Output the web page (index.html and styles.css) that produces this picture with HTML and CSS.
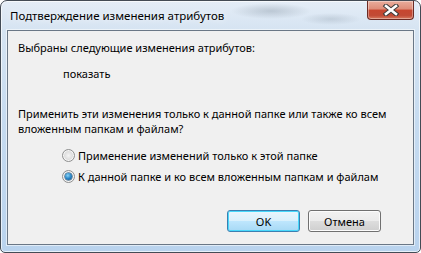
FILE: index.html
```html
<!DOCTYPE html>
<html lang="ru">
<head>
  <meta charset="UTF-8" />
  <title>Подтверждение изменения атрибутов</title>
  <link rel="stylesheet" href="styles.css">
</head>
<body>

  <div class="window">
    <div class="titlebar">
      <span class="title">Подтверждение изменения атрибутов</span>
      <button class="close-btn" aria-label="Закрыть">
        <svg width="18" height="12" viewBox="0 0 18 12">
          <path d="M4 2 L14 10 M14 2 L4 10" stroke="#3b3b3b" stroke-width="4.6" stroke-linecap="square" fill="none"/>
          <path d="M4 2 L14 10 M14 2 L4 10" stroke="#ffffff" stroke-width="2.6" stroke-linecap="square" fill="none"/>
        </svg>
      </button>
    </div>

    <div class="client">
      <p class="line">Выбраны следующие изменения атрибутов:</p>
      <p class="line change">показать</p>
      <p class="line question">Применить эти изменения только к данной папке или также ко всем<br>вложенным папкам и файлам?</p>

      <div class="options">
        <label class="option">
          <span class="radio"></span>
          <span>Применение изменений только к этой папке</span>
        </label>
        <label class="option">
          <span class="radio checked"></span>
          <span>К данной папке и ко всем вложенным папкам и файлам</span>
        </label>
      </div>

      <div class="buttons">
        <button class="btn btn-default">OK</button>
        <button class="btn">Отмена</button>
      </div>
    </div>
  </div>

</body>
</html>
```

FILE: styles.css
```css
* {
  margin: 0;
  padding: 0;
  box-sizing: border-box;
}

body {
  font-family: 'Noto Sans', 'Liberation Sans', sans-serif;
  font-size: 11px;
  color: #000;
  background: #fff;
  width: 421px;
  height: 253px;
  overflow: hidden;
}

.window {
  width: 421px;
  height: 253px;
  border: 1px solid #434b55;
  border-radius: 7px 7px 5px 5px;
  background:
    radial-gradient(ellipse 40px 8px at 270px 10px, rgba(120, 135, 150, 0.35), transparent),
    radial-gradient(ellipse 30px 6px at 330px 18px, rgba(120, 135, 150, 0.25), transparent),
    linear-gradient(180deg, #e4edf7 0, #d6e4f2 28px, #c6dbf0 120px, #b9d3ee 100%);
  box-shadow: inset 0 0 0 1px rgba(255, 255, 255, 0.65);
  display: flex;
  flex-direction: column;
  padding: 0 6px 7px 6px;
}

.titlebar {
  height: 29px;
  display: flex;
  align-items: flex-start;
  justify-content: space-between;
}

.title {
  margin-top: 7px;
  margin-left: 3px;
  white-space: nowrap;
  font-size: 11.5px;
  text-shadow: 0 0 6px rgba(255, 255, 255, 0.9);
}

.close-btn {
  width: 47px;
  height: 19px;
  border: 1px solid #6b2b24;
  border-top: none;
  border-radius: 0 0 4px 4px;
  background: linear-gradient(180deg, #e9ad9c 0, #de8c78 45%, #c7462f 50%, #c14a35 80%, #d77a5f 100%);
  box-shadow: inset 0 0 0 1px rgba(255, 255, 255, 0.35);
  display: flex;
  align-items: center;
  justify-content: center;
}

.client {
  flex: 1;
  background: #f0f0f0;
  border: 1px solid #6a7786;
  box-shadow: 0 0 0 1px rgba(255, 255, 255, 0.55);
  padding: 9px 10px 0 10px;
  display: flex;
  flex-direction: column;
}

.line {
  line-height: 15px;
  white-space: nowrap;
}

.change {
  margin-top: 11px;
  padding-left: 45px;
}

.question {
  margin-top: 25px;
}

.options {
  margin-top: 9px;
  padding-left: 44px;
  display: flex;
  flex-direction: column;
}

.option {
  height: 21px;
  display: flex;
  align-items: center;
  gap: 3px;
  white-space: nowrap;
}

.radio {
  flex: none;
  width: 13px;
  height: 13px;
  border-radius: 50%;
  border: 1px solid #8e8f8f;
  background: radial-gradient(circle at 50% 50%, #f4f4f4 0, #dcdcdc 55%, #e9e9e9 100%);
  box-shadow: inset 0 0 0 1px #f6f6f6;
  position: relative;
}

.radio.checked::after {
  content: "";
  position: absolute;
  left: 2px;
  top: 2px;
  width: 7px;
  height: 7px;
  border-radius: 50%;
  background: radial-gradient(circle at 40% 35%, #8ad4f6 0, #2a86c7 50%, #114c80 100%);
  box-shadow: 0 0 0 0.5px #1b4d74;
}

.buttons {
  margin-top: 23px;
  padding-right: 22px;
  display: flex;
  justify-content: flex-end;
  gap: 8px;
}

.btn {
  width: 73px;
  height: 22px;
  font-family: inherit;
  font-size: 11px;
  color: #000;
  border: 1px solid #707070;
  border-radius: 3px;
  background: linear-gradient(180deg, #f2f2f2 0, #ebebeb 50%, #dddddd 51%, #cfcfcf 100%);
  box-shadow: inset 0 0 0 1px #fcfcfc;
}

.btn-default {
  border-color: #3c7fb1;
  background: linear-gradient(180deg, #eaf6fd 0, #d9f0fc 50%, #bee6fd 51%, #a7d9f5 100%);
  box-shadow: inset 0 0 0 1px #48d8fb;
}
```
